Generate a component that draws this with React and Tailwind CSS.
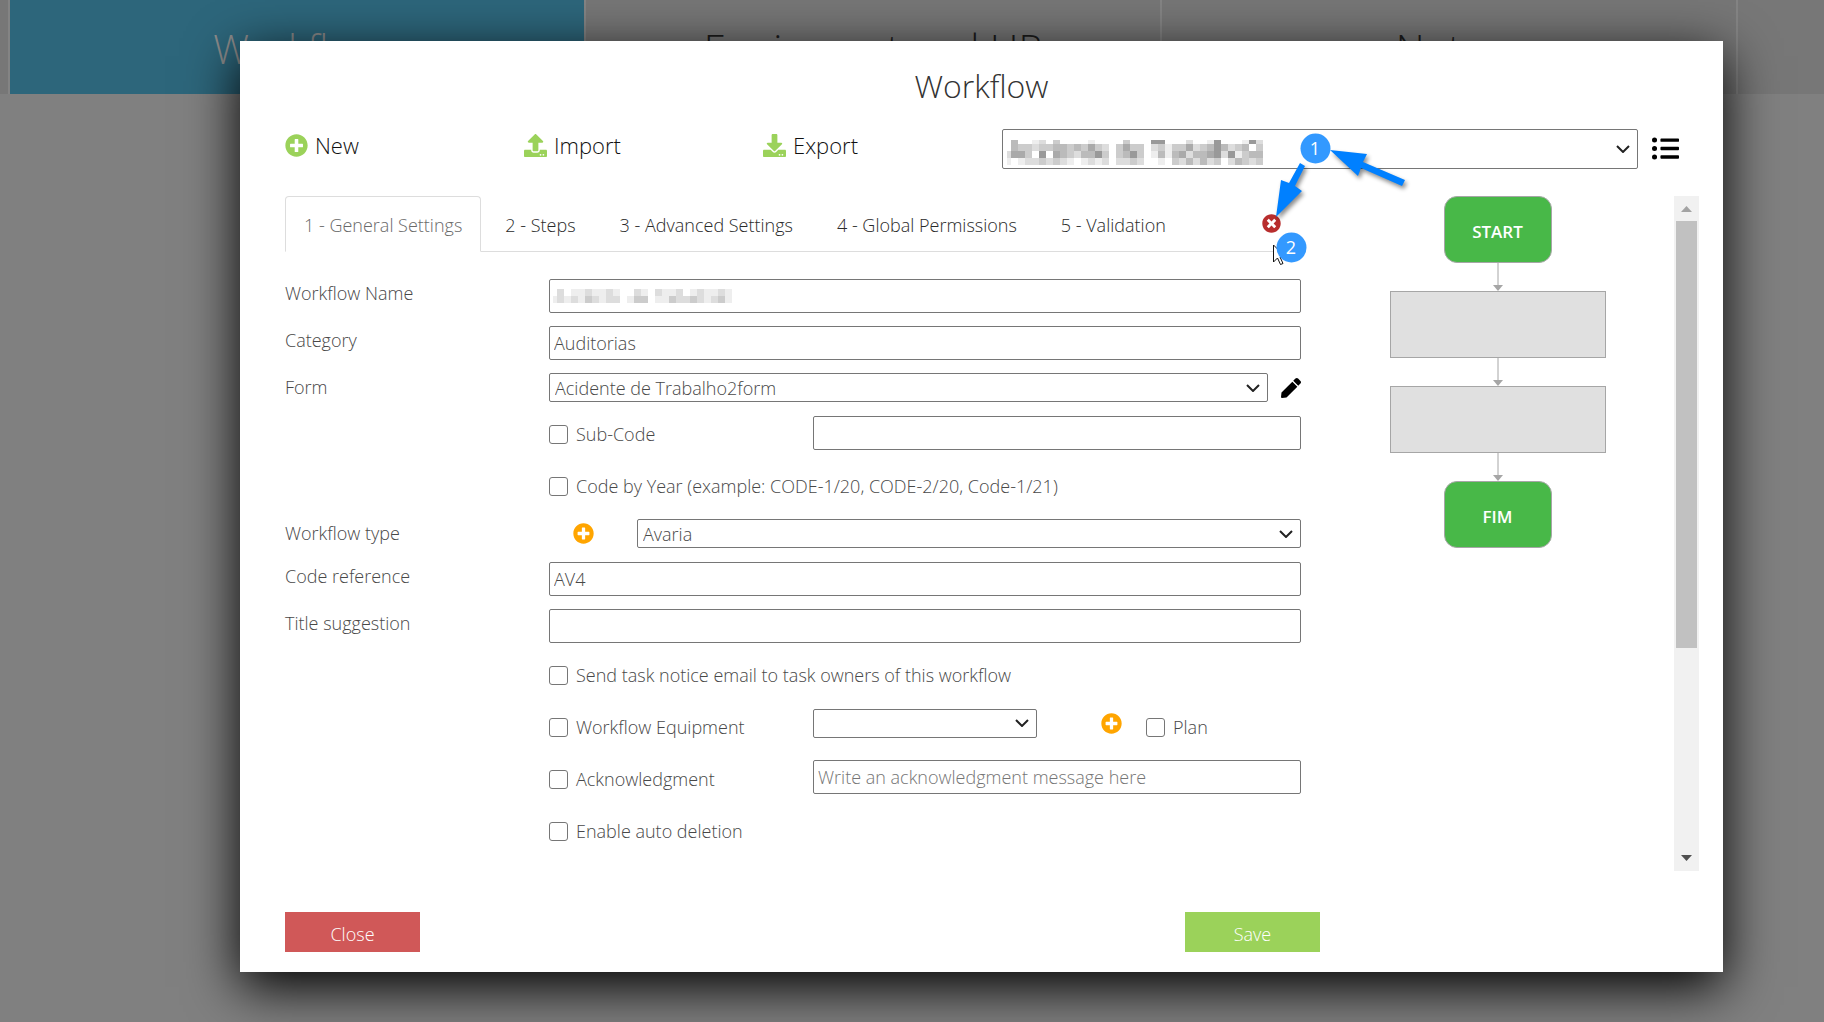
import { useState } from 'react';
import { FaDownload, FaListUl, FaPen, FaPlusCircle, FaTimesCircle, FaUpload } from 'react-icons/fa';

const TABS = [
  '1 - General Settings',
  '2 - Steps',
  '3 - Advanced Settings',
  '4 - Global Permissions',
  '5 - Validation',
];

const SECTIONS = [
  { name: 'Workflow',         className: 'flex-[574] bg-[#2d667b] text-[#8c8c8c]' },
  { name: 'Equipment and HR', className: 'flex-[574] bg-[#767676] text-[#1c1c1c]' },
  { name: 'Notes',            className: 'flex-[574] bg-[#767676] text-[#1c1c1c]' },
];

// Redacted names: one hex digit per cell, f is blank
const HIDDEN_TITLE = [
  'fbffedfcffffeffffcfff99fffdffe9fffe9d',
  'fbccdccbbcbcacdfcaccfdceccadcb9bdcbfc',
  'daacf9fabcdbb9cfcb9cfebebadbba9d9ecbb',
  'efeddcdcdefededfddcdffefcdbdbdcfdbcdc',
];
const HIDDEN_NAME = [
  'fdfeedeedeffdefdeedfedeede',
  'ededecdeddfeccfeecddcdedce',
];

export default function App() {
  return (
    <div className='relative min-h-screen bg-[#808080] font-["Open_Sans","Noto_Sans",sans-serif] text-[18px] leading-7 font-light text-[#484848]'>
      <div className="absolute inset-x-0 top-0 flex gap-0.5 bg-[#848484]">
        <div className="w-2 bg-[#777777]" />
        {SECTIONS.map(s => (
          <div key={s.name} className={`h-[94px] overflow-hidden text-center text-[40px] leading-[98px] ${s.className}`}>
            {s.name}
          </div>
        ))}
        <div className="flex-[86] bg-[#777777]" />
      </div>

      <div className="relative pt-[41px] pr-[101px] pb-[50px] pl-[240px]">
        <WorkflowDialog />
      </div>
    </div>
  );
}

function WorkflowDialog() {
  const [tab, setTab] = useState(TABS[0]);

  return (
    <div role="dialog" aria-label="Workflow" className="relative bg-white pt-[25px] pb-5 shadow-[0_15px_50px_#000]">
      <h1 className="text-center text-[32px] leading-10 text-[#333]">Workflow</h1>

      <div className="mt-[23px] flex items-start pr-11 pl-[45px]">
        <ToolButton icon={FaPlusCircle} label="New" />
        <ToolButton icon={FaUpload} label="Import" />
        <ToolButton icon={FaDownload} label="Export" />
        <div className="relative flex-1">
          <Select label="Workflow" className="h-10" />
          <Pixels rows={HIDDEN_TITLE} cropTop={3} className="top-[11px] left-[5px]" />
        </div>
        <button aria-label="List" className="mt-1.5 ml-3.5 text-black">
          <FaListUl className="size-[27px]" />
        </button>
      </div>

      <div className="mt-[27px] flex pr-6 pl-[45px]">
        <div className="flex-1">
          <div role="tablist" className="flex h-14 items-end border-b border-[#ddd]">
            {TABS.map(t => (
              <button
                key={t}
                role="tab"
                aria-selected={t === tab}
                onClick={() => setTab(t)}
                className={`mr-1 -mb-px h-14 rounded-t border pt-0.5 whitespace-nowrap ${
                  t === tab ? 'border-[#ddd] border-b-white bg-white px-[18px] text-[#6a6a6a]' : 'border-transparent px-[19px] text-[#2a2a2a]'
                }`}
              >
                {t}
              </button>
            ))}
            <button aria-label="Delete workflow" className="mr-5 mb-[18px] ml-auto text-[#b82e2e]">
              <FaTimesCircle className="size-[19px]" />
            </button>
          </div>
          <GeneralSettings />
        </div>
        <Diagram />
        <ScrollBar />
      </div>

      <div className="mt-[41px] flex justify-between pr-[403px] pl-[45px] text-white">
        <button className="h-10 w-[135px] bg-[#d05858] pt-1">Close</button>
        <button className="h-10 w-[135px] bg-[#9bd25a] pt-1">Save</button>
      </div>

      <Annotations />
    </div>
  );
}

function GeneralSettings() {
  return (
    <form className="pt-[27px]" onSubmit={e => e.preventDefault()}>
      <Row label="Workflow Name" id="name">
        <div className="relative flex-1">
          <TextInput id="name" />
          <Pixels rows={HIDDEN_NAME} className="top-[10px] left-1" />
        </div>
      </Row>
      <Row label="Category" id="category">
        <TextInput id="category" defaultValue="Auditorias" />
      </Row>
      <div className="flex">
        <label htmlFor="form" className="w-[264px]">Form</label>
        <Select id="form" value="Acidente de Trabalho2form" className="h-[29px]" />
        <button aria-label="Edit form" className="ml-[13px] text-black"><FaPen className="size-5" /></button>
      </div>

      <div className="mt-1.5 ml-[264px]">
        <div className="flex h-[52px] items-center">
          <Check label="Sub-Code" className="w-[264px]" />
          <TextInput aria-label="Sub-Code value" className="mb-0.5" />
        </div>
        <div className="flex h-[52px] items-center">
          <Check label="Code by Year (example: CODE-1/20, CODE-2/20, Code-1/21)" />
        </div>
      </div>

      <div className="mt-[7px] mb-3.5 flex">
        <label htmlFor="type" className="w-[264px]">Workflow type</label>
        <AddButton label="Add workflow type" className="mr-[43px] ml-6" />
        <Select id="type" value="Avaria" className="h-[29px]" />
      </div>
      <Row label="Code reference" id="code">
        <TextInput id="code" defaultValue="AV4" />
      </Row>
      <Row label="Title suggestion" id="title">
        <TextInput id="title" />
      </Row>

      <div className="-mt-[7px] ml-[264px]">
        <div className="flex h-[52px] items-center">
          <Check label="Send task notice email to task owners of this workflow" />
        </div>
        <div className="flex h-[52px] items-center">
          <Check label="Workflow Equipment" className="w-[264px]" />
          <div className="flex w-[224px] pb-2">
            <Select label="Equipment" className="h-[29px]" />
          </div>
          <AddButton label="Add equipment" className="mr-6 mb-2 ml-16" />
          <Check label="Plan" />
        </div>
        <div className="flex h-[52px] items-center">
          <Check label="Acknowledgment" className="w-[264px]" />
          <TextInput aria-label="Acknowledgment message" placeholder="Write an acknowledgment message here" className="mb-1" />
        </div>
        <div className="flex h-[52px] items-center">
          <Check label="Enable auto deletion" />
        </div>
      </div>
    </form>
  );
}

function ToolButton({ icon: Icon, label }) {
  return (
    <button className="flex h-8 w-[239px] items-center gap-[7px] text-[22px] text-[#111]">
      <Icon className="size-[23px] text-[#9bd25a]" />
      {label}
    </button>
  );
}

function Row({ label, id, children }) {
  return (
    <div className="mb-[13px] flex">
      <label htmlFor={id} className="w-[264px]">{label}</label>
      {children}
    </div>
  );
}

function TextInput({ className = '', ...props }) {
  return (
    <input
      type="text"
      className={`block h-[34px] w-full min-w-0 flex-1 rounded-xs border border-[#767676] bg-white px-1 placeholder:text-[#757575] ${className}`}
      {...props}
    />
  );
}

function Select({ id, label, value = '', className }) {
  return (
    <div className="relative flex-1">
      <select
        id={id}
        aria-label={label}
        className={`block w-full appearance-none rounded-xs border border-[#767676] bg-white px-[5px] ${className}`}
      >
        <option>{value}</option>
      </select>
      <svg viewBox="0 0 14 8" className="pointer-events-none absolute inset-y-0 right-2 my-auto h-2 w-3.5" fill="none" stroke="#222" strokeWidth="2">
        <path d="M1 1l6 6 6-6" />
      </svg>
    </div>
  );
}

function Check({ label, className = '' }) {
  return (
    <label className={`flex items-center gap-2 ${className}`}>
      <input type="checkbox" className="size-[19px] appearance-none rounded-[3px] border border-[#767676] bg-white checked:bg-[#0075ff]" />
      {label}
    </label>
  );
}

function AddButton({ label, className }) {
  return (
    <button type="button" aria-label={label} className={`text-[#ffa500] ${className}`}>
      <FaPlusCircle className="size-[21px]" />
    </button>
  );
}

// The first column (and the first row, with cropTop) is cut part way through a cell
function Pixels({ rows, cropTop = 0, className }) {
  const width = rows[0].length * 7 - 3;
  const height = rows.length * 7 - cropTop;
  return (
    <svg
      width={width}
      height={height}
      viewBox={`3 ${cropTop} ${width} ${height}`}
      className={`pointer-events-none absolute ${className}`}
      shapeRendering="crispEdges"
    >
      {rows.map((row, y) =>
        [...row].map((c, x) => c !== 'f' && (
          <rect key={`${x}-${y}`} x={x * 7} y={y * 7} width="7" height="7" fill={`#${c}${c}${c}`} />
        ))
      )}
    </svg>
  );
}

function Diagram() {
  return (
    <div className="flex w-[373px] flex-col items-center pl-5">
      <Terminal>START</Terminal>
      <Arrow />
      <div className="h-[67px] w-[216px] border border-[#a6a6a6] bg-[#e0e0e0]" />
      <Arrow />
      <div className="h-[67px] w-[216px] border border-[#a6a6a6] bg-[#e0e0e0]" />
      <Arrow />
      <Terminal>FIM</Terminal>
    </div>
  );
}

function Terminal({ children }) {
  return (
    <div className="flex h-[67px] w-[108px] items-center justify-center rounded-[13px] border border-[#a6a6a6] bg-[#48b848] pt-1 text-[17px] font-semibold text-white">
      {children}
    </div>
  );
}

function Arrow() {
  return (
    <svg width="10" height="28" className="text-[#a6a6a6]">
      <path d="M5 0v24" stroke="currentColor" />
      <path d="M0 22h10l-5 6z" fill="currentColor" />
    </svg>
  );
}

function ScrollBar() {
  return (
    <div className="flex h-[675px] w-[25px] flex-col items-center bg-[#f1f1f1]">
      <svg width="11" height="25" fill="#a3a3a3"><path d="M0 16l5.5-6 5.5 6z" /></svg>
      <div className="h-[427px] w-[21px] bg-[#c1c1c1]" />
      <svg width="11" height="25" className="mt-auto" fill="#505050"><path d="M0 9h11l-5.5 6z" /></svg>
    </div>
  );
}

function Annotations() {
  return (
    <svg width="170" height="145" viewBox="1255 130 170 145" className="pointer-events-none absolute top-[89px] left-[1015px]">
      <g fill="#0080ff" className="drop-shadow-[2px_3px_2px_rgba(0,0,0,0.45)]">
        <path d="M1330 150l37 4-4 8 42 18-3 6-41-18-3 8z" />
        <path d="M1300 163l5 3-10 20 7 5-26 26 5-37 8 3z" />
      </g>
      <path d="M1273.5 245v17l4-4 3 6.5 2.5-1-3-6.5h5.5z" fill="#fff" stroke="#111" />
      <g fill="#3399ff">
        <circle cx="1315.5" cy="148.5" r="15" />
        <circle cx="1291.5" cy="247.5" r="15" />
      </g>
      <g fill="#fff" fontSize="18" textAnchor="middle" fontWeight="400">
        <text x="1315" y="155">1</text>
        <text x="1291" y="254">2</text>
      </g>
    </svg>
  );
}
